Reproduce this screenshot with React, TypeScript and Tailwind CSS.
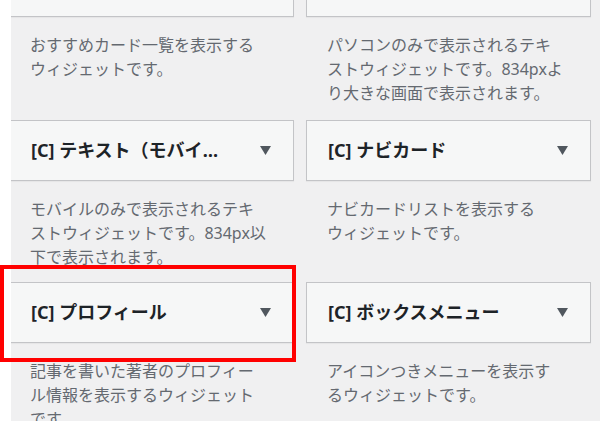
import React from 'react';

interface IWidget {
  title: string;
  lines: string[];
}

const rows: IWidget[][] = [
  [
    { title: '', lines: ['おすすめカード一覧を表示する', 'ウィジェットです。'] },
    { title: '', lines: ['パソコンのみで表示されるテキ', 'ストウィジェットです。834pxよ', 'り大きな画面で表示されます。'] },
  ],
  [
    { title: '[C] テキスト（モバイル）', lines: ['モバイルのみで表示されるテキ', 'ストウィジェットです。834px以', '下で表示されます。'] },
    { title: '[C] ナビカード', lines: ['ナビカードリストを表示する', 'ウィジェットです。'] },
  ],
  [
    { title: '[C] プロフィール', lines: ['記事を書いた著者のプロフィー', 'ル情報を表示するウィジェット', 'です。'] },
    { title: '[C] ボックスメニュー', lines: ['アイコンつきメニューを表示す', 'るウィジェットです。'] },
  ],
];

const Arrow = () => (
  <svg width="11" height="9" viewBox="0 0 11 9" className="block">
    <polygon points="0,0 11,0 5.5,9" fill="#50575e" />
  </svg>
);

const Widget = ({ widget, first }: { widget: IWidget; first: boolean }) => (
  <div>
    {first ? (
      <div className="h-[17px] border-x border-b border-[#c3c4c7] bg-[#f6f7f7] shadow-[0_1px_1px_rgba(0,0,0,0.04)]" />
    ) : (
      <div className="flex h-[61px] items-center border border-[#c3c4c7] bg-[#f6f7f7] shadow-[0_1px_1px_rgba(0,0,0,0.04)]">
        <h3 className="min-w-0 flex-1 truncate pl-[21px] text-[18px] font-bold text-[#1d2327]">{widget.title}</h3>
        <div className="flex w-[70px] shrink-0 justify-end pr-[22px]">
          <Arrow />
        </div>
      </div>
    )}
    <p className={`${first ? 'h-[103px]' : 'h-[101px]'} whitespace-nowrap pl-[21px] pt-[16px] text-[16px] leading-[24px] text-[#646970]`}>
      {widget.lines.map((line, i) => (
        <React.Fragment key={i}>
          {line}
          {i < widget.lines.length - 1 && <br />}
        </React.Fragment>
      ))}
    </p>
  </div>
);

const App = () => {
  return (
    <div
      className="relative flex h-[421px] w-[600px] overflow-hidden bg-[#f0f0f1]"
      style={{ fontFamily: '"Noto Sans", "Noto Sans CJK JP", sans-serif' }}
    >
      <div className="w-[11px] shrink-0 bg-white" />
      <div className="min-w-0 flex-1 overflow-hidden">
        <div className="-ml-[2px] grid grid-cols-[285px_285px] gap-x-[12px]">
          {rows.map((row, r) =>
            row.map((widget, c) => <Widget key={`${r}-${c}`} widget={widget} first={r === 0} />)
          )}
        </div>
      </div>
      {/* highlight */}
      <div className="absolute left-0 top-[265px] h-[97px] w-[296px] border-4 border-[#ff0000]" />
    </div>
  );
};

export default App;
